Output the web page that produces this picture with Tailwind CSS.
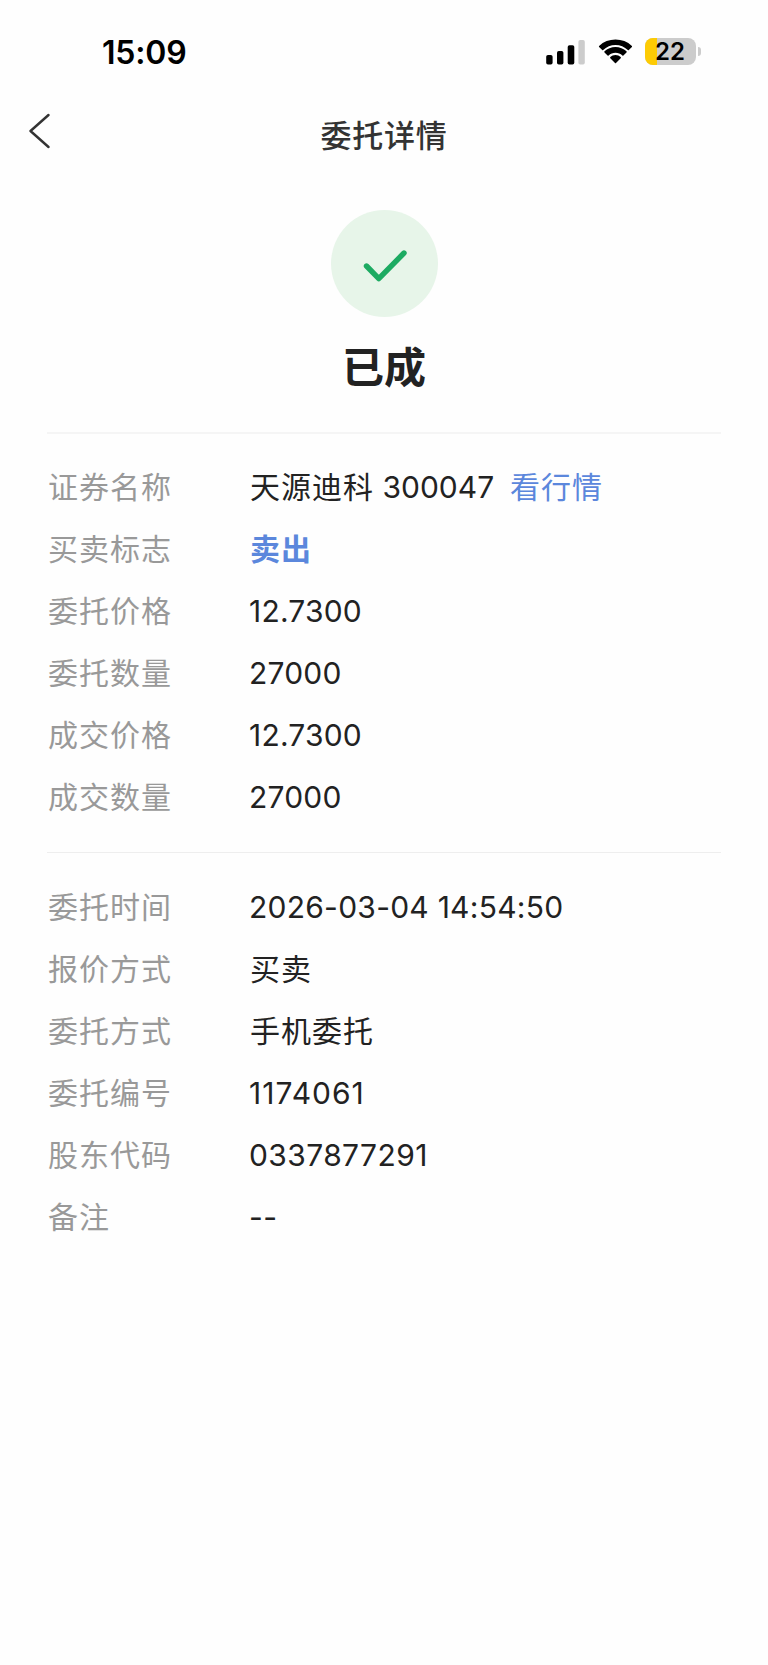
<!DOCTYPE html>
<html lang="zh-CN">

<head>
  <meta charset="utf-8"/>
  <meta content="width=device-width, initial-scale=1.0" name="viewport"/>
  <title>委托详情</title>
  <script src="https://cdn.jsdelivr.net/npm/@tailwindcss/browser@4"></script>
</head>

<body class="bg-[#fefefe] min-h-screen font-['Inter','Noto_Sans_CJK_SC',sans-serif] text-[#222222]">

<!-- Status bar -->
<div class="flex items-center justify-between h-[103px] pl-[102px] pr-[67px]">
  <span class="text-[32px] leading-none font-semibold text-black tracking-[-0.2px] pt-[2px]">15:09</span>
  <div class="flex items-center">
    <svg class="w-10 h-[26px]" viewBox="0 0 40 26">
      <rect x="0.2" y="16" width="6.4" height="9.6" rx="1.8" fill="#000"/>
      <rect x="11" y="12" width="6.4" height="13.6" rx="1.8" fill="#000"/>
      <rect x="21.7" y="6.2" width="6.6" height="19.4" rx="1.8" fill="#000"/>
      <rect x="32.4" y="1" width="6.4" height="24.6" rx="1.8" fill="#cccccc"/>
    </svg>
    <svg class="w-[35px] h-[26px] ml-3" viewBox="0 0 35 26">
      <path d="M17.5 5.9c4.7 0 9 1.8 12.3 5.1.3.3.7.3 1 0l3.1-3.1c.3-.3.3-.7 0-1C29.4 2.8 23.7.6 17.5.6S5.600 2.800 1.100 6.900c-.3.300-.3.700 0 1l3.100 3.100c.3.300.7.300 1 0 3.300-3.300 7.600-5.100 12.300-5.100z"/>
      <path d="M17.500 13.700c2.700 0 5 1 6.900 2.700.3.300.7.300 1 0l3.100-3c.3-.3.300-.8 0-1.100-2.900-2.700-6.800-4.300-11-4.300s-8.100 1.600-11 4.300c-.3.300-.3.800 0 1.100l3.100 3c.3.300.7.300 1 0 1.900-1.700 4.200-2.700 6.900-2.700z"/>
      <path d="M22.700 19.200c.3-.3.300-.8 0-1.100-1.400-1.300-3.200-2-5.200-2s-3.800.7-5.200 2c-.3.300-.3.800 0 1.100l4.700 4.800c.3.300.7.300 1 0z"/>
    </svg>
    <div class="flex items-center ml-3">
      <div class="relative w-[51px] h-[27px] rounded-[8px] overflow-hidden bg-[#cccccc]">
        <div class="w-3 h-full bg-[#fdcb04]"></div>
        <span class="absolute inset-0 flex items-center justify-center pt-px pr-px text-[24px] leading-none font-semibold text-black">22</span>
      </div>
      <div class="w-[3px] h-[9px] ml-[2px] rounded-r-full bg-[#cccccc]"></div>
    </div>
  </div>
</div>

<!-- Navigation bar -->
<div class="grid grid-cols-[1fr_auto_1fr] items-center h-[66px] px-[29px]">
  <svg class="w-[22px] h-9 -mt-[10px]" viewBox="0 0 22 36" fill="none" stroke="#333333" stroke-width="2.4" stroke-linecap="round" stroke-linejoin="round">
    <path d="M19.500 2L1.500 18l18 16"/>
  </svg>
  <h1 class="-mt-px text-[31px] leading-none font-medium text-[#333333] tracking-[0.8px]">委托详情</h1>
</div>

<!-- Order status -->
<div class="flex flex-col items-center pt-[41px]">
  <div class="flex items-center justify-center w-[107px] h-[107px] rounded-full bg-[#e7f5e9]">
    <svg class="w-12 h-9 mt-[5px]" viewBox="0 0 48 36" fill="none" stroke="#1dab62" stroke-width="5.400" stroke-linecap="round" stroke-linejoin="round">
      <path d="M6.500 18l12.300 12.600L44 5"/>
    </svg>
  </div>
  <div class="mt-[30px] text-[42px] leading-[42px] font-bold">已成</div>
</div>

<!-- Order details -->
<div class="mx-[47px] mt-[43px] border-t-2 border-[#f5f5f5] pt-[22px] pb-[23px] text-[30px] leading-[62.100px]">
  <div class="flex">
    <div class="w-[202px] pl-px text-[#999999] tracking-[1px]">证券名称</div>
    <div class="pl-px"><span class="tracking-[1px]">天源迪科</span> 300047</div>
    <a class="ml-4 text-[#5b87dc] tracking-[1px]">看行情</a>
  </div>
  <div class="flex">
    <div class="w-[202px] pl-px text-[#999999] tracking-[1px]">买卖标志</div>
    <div class="pl-px font-bold text-[#5b87dc] tracking-[1px]">卖出</div>
  </div>
  <div class="flex">
    <div class="w-[202px] pl-px text-[#999999] tracking-[1px]">委托价格</div>
    <div class="tracking-[0.2px]">12.7300</div>
  </div>
  <div class="flex">
    <div class="w-[202px] pl-px text-[#999999] tracking-[1px]">委托数量</div>
    <div class="tracking-[0.2px]">27000</div>
  </div>
  <div class="flex">
    <div class="w-[202px] pl-px text-[#999999] tracking-[1px]">成交价格</div>
    <div class="tracking-[0.2px]">12.7300</div>
  </div>
  <div class="flex">
    <div class="w-[202px] pl-px text-[#999999] tracking-[1px]">成交数量</div>
    <div class="tracking-[0.2px]">27000</div>
  </div>
</div>

<!-- Entrust information -->
<div class="mx-[47px] border-t border-[#eeeeee] pt-[23px] text-[30px] leading-[62.100px]">
  <div class="flex">
    <div class="w-[202px] pl-px text-[#999999] tracking-[1px]">委托时间</div>
    <div class="tracking-[0.25px]">2026-03-04 14:54:50</div>
  </div>
  <div class="flex">
    <div class="w-[202px] pl-px text-[#999999] tracking-[1px]">报价方式</div>
    <div class="pl-px tracking-[1px]">买卖</div>
  </div>
  <div class="flex">
    <div class="w-[202px] pl-px text-[#999999] tracking-[1px]">委托方式</div>
    <div class="pl-px tracking-[1px]">手机委托</div>
  </div>
  <div class="flex">
    <div class="w-[202px] pl-px text-[#999999] tracking-[1px]">委托编号</div>
    <div class="tracking-[1px]">1174061</div>
  </div>
  <div class="flex">
    <div class="w-[202px] pl-px text-[#999999] tracking-[1px]">股东代码</div>
    <div class="tracking-[0.4px]">0337877291</div>
  </div>
  <div class="flex">
    <div class="w-[202px] pl-px text-[#999999] tracking-[1px]">备注</div>
    <div class="tracking-[0.5px]">--</div>
  </div>
</div>

</body>
</html>
